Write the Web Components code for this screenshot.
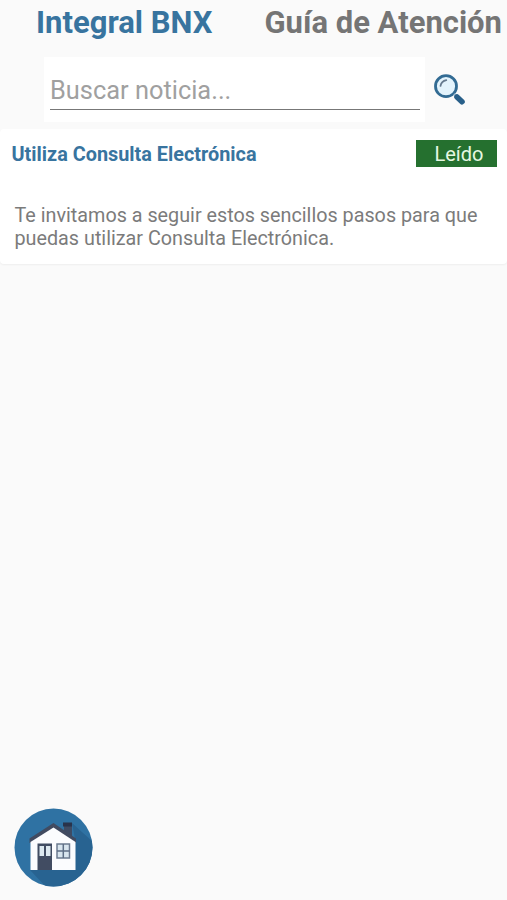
<!DOCTYPE html>
<html lang="es">
<head>
<meta charset="utf-8">
<meta name="viewport" content="width=device-width, initial-scale=1">
<title>Integral BNX</title>
<style>
body {
  margin: 0;
  background: #fafafa;
  font-family: Roboto, "Liberation Sans", sans-serif;
}
</style>
</head>
<body>

<news-app>
  <tab-bar slot="tabs">
    <tab-item active>Integral BNX</tab-item>
    <tab-item>Guía de Atención</tab-item>
  </tab-bar>
  <search-bar slot="search">Buscar noticia...</search-bar>
  <news-card>
    <span slot="title">Utiliza Consulta Electrónica</span>
    <span slot="state">Leído</span>
    Te invitamos a seguir estos sencillos pasos para que puedas utilizar Consulta Electrónica.
  </news-card>
  <home-button slot="home"></home-button>
</news-app>

<script>
const templateApp = document.createElement("template");
templateApp.innerHTML = `
<slot name="tabs"></slot>
<slot name="search"></slot>
<main><slot></slot></main>
<footer><slot name="home"></slot></footer>

<style>
:host {
  display: flex;
  flex-direction: column;
  height: 900px;
  overflow: hidden;
}

main {
  flex: 1;
  padding-top: 7px;
}

footer {
  padding: 0 0 13px 14px;
}
</style>
`;

const templateTabs = document.createElement("template");
templateTabs.innerHTML = `
<slot></slot>

<style>
:host {
  display: flex;
  justify-content: space-between;
  height: 45px;
  padding: 0 5px 12px 36px;
  box-sizing: content-box;
}
</style>
`;

const templateTab = document.createElement("template");
templateTab.innerHTML = `
<slot></slot>

<style>
:host {
  display: block;
  font-size: 31px;
  font-weight: 700;
  line-height: 45px;
  white-space: nowrap;
  color: #757575;
}

:host([active]) {
  color: #38749f;
}
</style>
`;

const templateSearch = document.createElement("template");
templateSearch.innerHTML = `
<div id="box">
  <div id="field"><slot></slot></div>
</div>
<svg width="34" height="34" viewBox="0 0 34 34">
  <circle cx="13" cy="13.2" r="10.5" fill="#e3f3fc" stroke="#326b93" stroke-width="2.8"/>
  <path d="M7.500 13q.8-4.8 5.8-5.8" fill="none" stroke="#65798e" stroke-width="1.7" stroke-linecap="round"/>
  <path d="M21 21l3 3" stroke="#9fb9cc" stroke-width="2"/>
  <path d="M24 24l5 4.700" stroke="#285f89" stroke-width="5.600" stroke-linecap="round"/>
</svg>

<style>
:host {
  display: flex;
  align-items: center;
  gap: 8px;
  padding-left: 44px;
}

#box {
  width: 381px;
  height: 65px;
  padding: 14px 5px 12px 6px;
  box-sizing: border-box;
  background: #fff;
}

#field {
  height: 39px;
  box-sizing: border-box;
  border-bottom: 1px solid #777;
  font-size: 25.4px;
  line-height: 38px;
  color: #a0a0a0;
}
</style>
`;

const templateCard = document.createElement("template");
templateCard.innerHTML = `
<header>
  <h2><slot name="title"></slot></h2>
  <div id="state"><slot name="state"></slot></div>
</header>
<p><slot></slot></p>

<style>
:host {
  display: block;
  height: 135px;
  box-sizing: border-box;
  padding: 11px 10px 0 11.5px;
  background: #fff;
  border-radius: 4px;
  box-shadow: 0 1px 2px rgba(0, 0, 0, .05);
}

header {
  display: flex;
  justify-content: space-between;
  align-items: flex-start;
}

h2 {
  margin: 0;
  font-size: 19.85px;
  line-height: 30px;
  font-weight: 700;
  color: #38749f;
}

#state {
  width: 81px;
  height: 27px;
  padding-left: 5px;
  box-sizing: border-box;
  background: #25702f;
  color: #e6f8e2;
  font-size: 20px;
  line-height: 29px;
  text-align: center;
}

p {
  margin: 34px 0 0 3px;
  font-size: 19.77px;
  line-height: 23.3px;
  color: #7b7b7b;
}
</style>
`;

const templateHome = document.createElement("template");
templateHome.innerHTML = `
<svg width="79" height="79" viewBox="0 0 79 79">
  <defs><clipPath id="round"><circle cx="39.5" cy="39.5" r="39"/></clipPath></defs>
  <g clip-path="url(#round)">
    <rect width="79" height="79" fill="#2f72a3"/>
    <path d="M58 15L79 34V79H32L16 62L61 31z" fill="#286391"/>
    <path d="M50 15h8v15l-8-6z" fill="#3e4b63"/>
    <path d="M49 14.500h9v4h-9z" fill="#29334b"/>
    <path d="M15.500 30.500L39.500 15L62 30.500V35H15.500z" fill="#414b61"/>
    <path d="M16.500 34L39.500 19.500L61.500 34V62H16.500z" fill="#fbfcfe"/>
    <path d="M23.500 35.500H38V62H23.500z" fill="#414c62"/>
    <path d="M25.500 38h4.500v10h-4.500zM32 38h4.500v10H32z" fill="#dce8ef"/>
    <path d="M43 36h12.500v14H43z" fill="#d8e5ee" stroke="#6c7b90" stroke-width="1.500"/>
    <path d="M49.300 36v14M43 43h12.500" stroke="#5d6e85" stroke-width="1.500"/>
  </g>
</svg>

<style>
:host {
  display: block;
  width: 79px;
  height: 79px;
}

svg {
  display: block;
}
</style>
`;

// every element only needs its own markup in a shadow root
function define(name, template) {
  customElements.define(name, class extends HTMLElement {
    constructor() {
      super();
      const shadow = this.attachShadow({mode: "open"});
      shadow.append(template.content.cloneNode(true));
    }
  });
}

define("news-app", templateApp);
define("tab-bar", templateTabs);
define("tab-item", templateTab);
define("search-bar", templateSearch);
define("news-card", templateCard);
define("home-button", templateHome);
</script>
</body>
</html>
